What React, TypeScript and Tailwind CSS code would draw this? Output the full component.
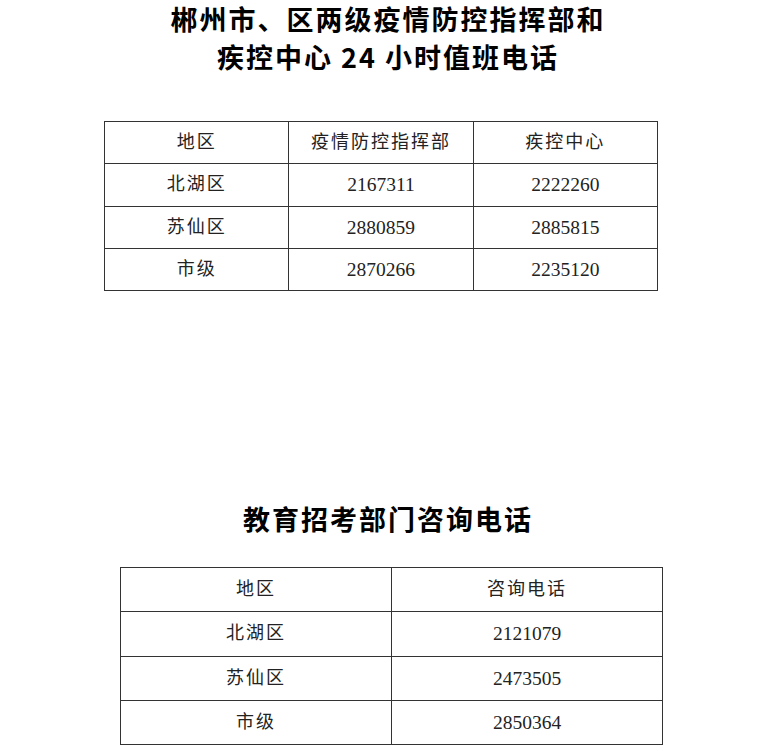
import React from 'react';

const dutyRows = [
  ['北湖区', '2167311', '2222260'],
  ['苏仙区', '2880859', '2885815'],
  ['市级', '2870266', '2235120'],
];

const eduRows = [
  ['北湖区', '2121079'],
  ['苏仙区', '2473505'],
  ['市级', '2850364'],
];

const titleFont = { fontFamily: '"Noto Sans CJK SC", "Noto Sans", sans-serif' };
const cellFont = { fontFamily: '"Liberation Serif", "Noto Sans CJK SC", serif' };

export default function App() {
  return (
    <div className="w-[772px] h-[752px] bg-white text-black overflow-hidden">
      {/* 标题一 */}
      <h1
        className="text-center text-[27px] leading-[40px] font-bold tracking-[2px] pl-[4px]"
        style={titleFont}
      >
        <span className="block leading-[37px]">郴州市、区两级疫情防控指挥部和</span>
        <span className="block">疾控中心 24 小时值班电话</span>
      </h1>

      <table className="ml-[104px] mt-[44px] w-[554px] border-collapse table-fixed text-[#222]" style={cellFont}>
        <tbody>
          <tr className="h-[42.3px]">
            <td className="border border-[#333] text-center text-[18px] tracking-[2px]">地区</td>
            <td className="border border-[#333] text-center text-[18px] tracking-[2px]">疫情防控指挥部</td>
            <td className="border border-[#333] text-center text-[18px] tracking-[2px]">疾控中心</td>
          </tr>
          {dutyRows.map((r) => (
            <tr key={r[0]} className="h-[42.3px]">
              <td className="border border-[#333] text-center text-[18px] tracking-[2px]">{r[0]}</td>
              <td className="border border-[#333] text-center text-[19.5px]">{r[1]}</td>
              <td className="border border-[#333] text-center text-[19.5px]">{r[2]}</td>
            </tr>
          ))}
        </tbody>
      </table>

      {/* 标题二 */}
      <h2
        className="mt-[208px] text-center text-[27px] leading-[40px] font-bold tracking-[2px] pl-[4px]"
        style={titleFont}
      >
        教育招考部门咨询电话
      </h2>

      <table className="ml-[120px] mt-[28px] w-[543px] border-collapse table-fixed text-[#222]" style={cellFont}>
        <tbody>
          <tr className="h-[44.2px]">
            <td className="border border-[#333] text-center text-[18px] tracking-[2px]">地区</td>
            <td className="border border-[#333] text-center text-[18px] tracking-[2px]">咨询电话</td>
          </tr>
          {eduRows.map((r) => (
            <tr key={r[0]} className="h-[44.2px]">
              <td className="border border-[#333] text-center text-[18px] tracking-[2px]">{r[0]}</td>
              <td className="border border-[#333] text-center text-[19.5px]">{r[1]}</td>
            </tr>
          ))}
        </tbody>
      </table>
    </div>
  );
}
